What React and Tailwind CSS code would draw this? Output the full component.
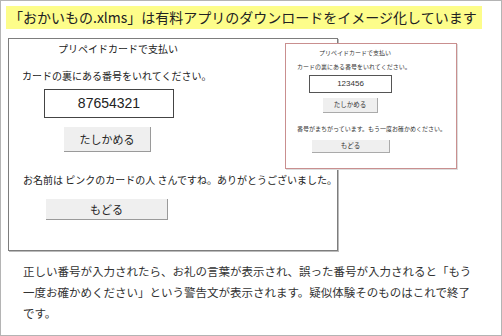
import React from 'react';

const jp = { fontFamily: '"Noto Sans CJK JP", "Liberation Sans", sans-serif' };
const num = { fontFamily: '"Liberation Sans", "Noto Sans CJK JP", sans-serif' };

const App = () => {
    return (
        <div className="w-[502px] h-[336px] bg-white text-[#333] overflow-hidden" style={jp}>
            <div className="relative w-full h-full border border-[#b4b4b4] pt-[5px]">
                {/* 見出し */}
                <div className="ml-[5px] w-[476px] h-[23px] bg-[#fdfd8a] pl-[3px] text-[14px] leading-[23px] text-[#222] tracking-[0px]">
                    「おかいもの.xlms」は有料アプリのダウンロードをイメージ化しています
                </div>

                {/* 正しい番号の画面 */}
                <div className="ml-[7px] mt-[9px] w-[330px] h-[213px] border border-[#7d7d7d] shadow-[1px_1px_0_#bbb] text-[10px] text-[#222]">
                    <div className="ml-[49px] mt-[3px] leading-[14px]">プリペイドカードで支払い</div>
                    <div className="ml-[13px] mt-[13px] leading-[14px]">カードの裏にある番号をいれてください。</div>
                    <div className="ml-[35px] mt-[6px] w-[130px] h-[29px] border-[1.5px] border-[#444] flex items-center justify-center text-[14px]" style={num}>
                        87654321
                    </div>
                    <div className="ml-[55px] mt-[9px] w-[87px] h-[25px] bg-[#efefef] border-r border-b border-[#9a9a9a] flex items-center justify-center text-[11px]">
                        たしかめる
                    </div>
                    <div className="ml-[14px] mt-[21px] leading-[14px]">お名前は ピンクのカードの人 さんですね。ありがとうございました。</div>
                    <div className="ml-[37px] mt-[12px] w-[122px] h-[21px] bg-[#efefef] border-r border-b border-[#9a9a9a] flex items-center justify-center text-[11px]">
                        もどる
                    </div>
                </div>

                {/* 誤った番号の画面（重なっている） */}
                <div className="absolute left-[284px] top-[42px] w-[172px] h-[126px] bg-white border border-[#c98f8f] shadow-[1px_1px_0_#ddd] text-[6px] text-[#333]">
                    <div className="ml-[33px] mt-[5px] leading-[8px]">プリペイドカードで支払い</div>
                    <div className="ml-[11px] mt-[6px] leading-[8px]">カードの裏にある番号をいれてください。</div>
                    <div className="ml-[23px] mt-[4px] w-[83px] h-[18px] border border-[#555] flex items-center justify-center text-[8px]" style={num}>
                        123456
                    </div>
                    <div className="ml-[37px] mt-[5px] w-[55px] h-[15px] bg-[#efefef] border-r border-b border-[#aaa] flex items-center justify-center text-[6.5px]">
                        たしかめる
                    </div>
                    <div className="ml-[11px] mt-[12px] leading-[8px]">番号がまちがっています。もう一度お確かめください。</div>
                    <div className="ml-[26px] mt-[7px] w-[78px] h-[13px] bg-[#efefef] border-r border-b border-[#aaa] flex items-center justify-center text-[6.5px]">
                        もどる
                    </div>
                </div>

                {/* 説明文 */}
                <p className="ml-[22px] mt-[10px] w-[452px] text-[11.5px] leading-[21px] text-[#333]">
                    正しい番号が入力されたら、お礼の言葉が表示され、誤った番号が入力されると「もう一度お確かめください」という警告文が表示されます。疑似体験そのものはこれで終了です。
                </p>
            </div>
        </div>
    );
};

export default App;
